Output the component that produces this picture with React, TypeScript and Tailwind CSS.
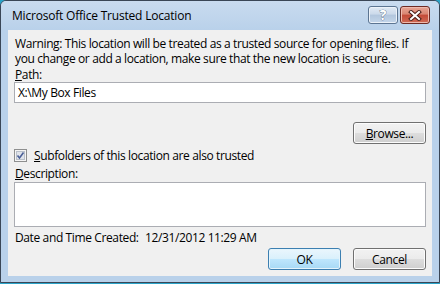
import React from "react";

const font = { fontFamily: '"Open Sans", "Noto Sans", sans-serif' };

const Btn = ({ children, def = false }: { children: React.ReactNode; def?: boolean }) => (
  <div
    className={`w-[73px] h-[22px] rounded-[3px] border flex items-center justify-center text-black ${
      def
        ? "border-[#3c7fb1] bg-[linear-gradient(#eaf6fd_0%,#d9f0fc_50%,#bee6fd_51%,#a7d9f5_100%)] shadow-[inset_0_0_0_1px_#e4f4fc]"
        : "border-[#707070] bg-[linear-gradient(#f2f2f2_0%,#ebebeb_50%,#dddddd_51%,#cfcfcf_100%)] shadow-[inset_0_0_0_1px_#fcfcfc]"
    }`}
  >
    {children}
  </div>
);

const TitleButton = ({ close = false }: { close?: boolean }) => (
  <div
    className={`w-[30px] h-[18px] rounded-[3px] border flex items-center justify-center ${
      close
        ? "border-[#6e2a23] bg-[linear-gradient(#e8a493_0%,#d88572_45%,#c34a37_50%,#cf6b56_100%)] shadow-[inset_0_0_0_1px_#eeb9ad]"
        : "border-[#5c7592] bg-[linear-gradient(#e1eaf5_0%,#cbd9ea_45%,#b2c6dd_50%,#c4d6ea_100%)] shadow-[inset_0_0_0_1px_#ecf2f9]"
    }`}
  >
    {close ? (
      <svg width="14" height="11" viewBox="0 0 14 11">
        <path d="M3 2 L11 9 M11 2 L3 9" stroke="#4a1d17" strokeWidth="4" strokeLinecap="square" />
        <path d="M3 2 L11 9 M11 2 L3 9" stroke="#ffffff" strokeWidth="2" strokeLinecap="square" />
      </svg>
    ) : (
      <span
        className="text-[14px] font-bold text-white leading-none"
        style={{ ...font, WebkitTextStroke: "0.6px #3b4e66", paintOrder: "stroke fill" }}
      >
        ?
      </span>
    )}
  </div>
);

export default function App() {
  return (
    <div className="w-[440px] h-[284px] bg-[#2aa3c8] flex flex-col" style={font}>
      <div className="w-[440px] h-[283px] border border-[#3a4656] rounded-t-[6px] bg-[#b9d1ea] flex flex-col">
        {/* title bar */}
        <div className="h-[29px] flex items-center pl-[11px] pr-[9px] rounded-t-[5px] bg-[linear-gradient(#c9dbef,#b9d1ea)]">
          <span className="text-[12px] tracking-[-0.2px] text-black flex-1 pt-[1px]">
            Microsoft Office Trusted Location
          </span>
          <div className="flex gap-[2px] -mt-[1px]">
            <TitleButton />
            <TitleButton close />
          </div>
        </div>

        {/* client area */}
        <div className="mx-[7px] h-[246px] bg-[#f0f0f0] pl-[6px] pr-[6px] pt-[6px] text-[12px] tracking-[-0.38px] text-black leading-[15px]">
          <p className="pl-[1px] whitespace-nowrap">
            Warning: This location will be treated as a trusted source for opening files. If
            <br />
            you change or add a location, make sure that the new location is secure.
          </p>
          <div className="pl-[1px] mt-[1px]">
            <span className="underline">P</span>ath:
          </div>
          <div className="h-[21px] border border-[#abadb3] bg-white flex items-center pl-[3px]">
            X:\My Box Files
          </div>
          <div className="flex justify-end mt-[19px]">
            <Btn>
              <span className="underline">B</span>rowse...
            </Btn>
          </div>
          <div className="flex items-center mt-[5px] h-[13px]">
            <svg width="13" height="13" viewBox="0 0 13 13">
              <rect x="0.5" y="0.5" width="12" height="12" fill="#f4f4f4" stroke="#8e8f8f" />
              <rect x="2.5" y="2.5" width="8" height="8" fill="#dfe3ea" stroke="#b9c0ca" />
              <path d="M3.5 6.5 L5.5 9 L9.5 3.5" fill="none" stroke="#4a5f97" strokeWidth="1.6" />
            </svg>
            <span className="ml-[7px] whitespace-nowrap">
              <span className="underline">S</span>ubfolders of this location are also trusted
            </span>
          </div>
          <div className="pl-[1px] mt-[4px]">
            <span className="underline">D</span>escription:
          </div>
          <div className="mt-[1px] h-[45px] border border-[#abadb3] bg-white" />
          <div className="flex mt-[3px] pl-[1px] whitespace-nowrap">
            <span className="w-[130px]">Date and Time Created:</span>
            <span>12/31/2012 11:29 AM</span>
          </div>
          <div className="flex justify-end gap-[12px] mt-[3px]">
            <Btn def>OK</Btn>
            <Btn>Cancel</Btn>
          </div>
        </div>
      </div>
    </div>
  );
}
